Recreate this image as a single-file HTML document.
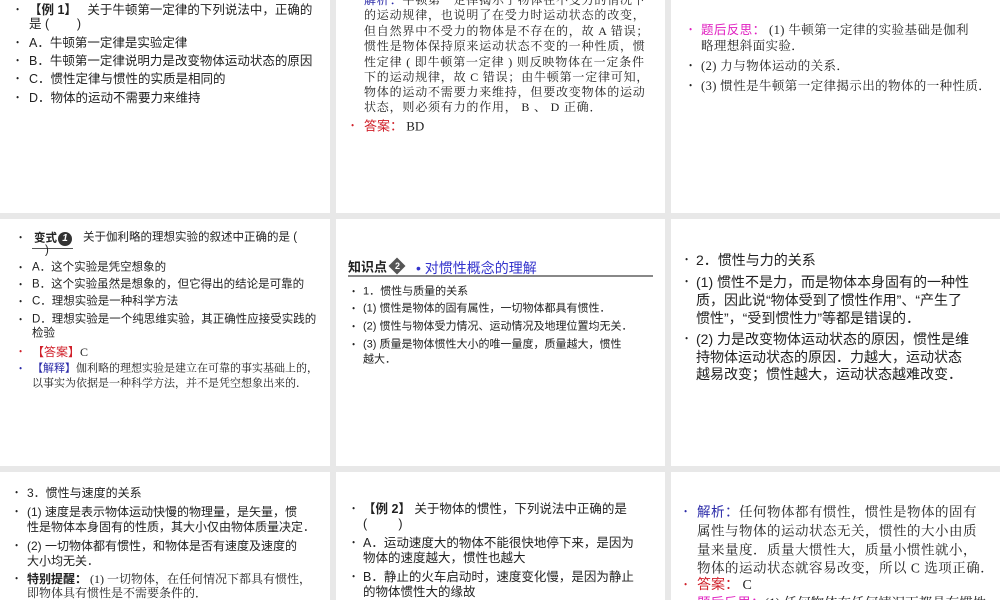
<!DOCTYPE html>
<html><head><meta charset="utf-8"><style>
*{margin:0;padding:0;box-sizing:border-box}
body{width:1000px;height:600px;background:#e8e8e8;position:relative;overflow:hidden;font-family:"Liberation Serif","Noto Serif CJK SC","Noto Sans CJK SC",serif;color:#222}
.p{position:absolute;background:#fff;overflow:hidden}
.l{position:absolute;white-space:nowrap;line-height:1;transform:translateY(-50%)}
.b{position:absolute;font-size:9px;line-height:1;transform:translateY(-50%)}
.s{font-family:"Liberation Sans","Noto Sans CJK SC",sans-serif}
.red{color:#d0202a}.blue{color:#2a2aa8}.pink{color:#e020c0}
</style></head><body>
<!-- row1 -->
<div class="p" style="left:0;top:0;width:330px;height:213px">
 <div class="b" style="left:16px;top:10px">•</div><div class="l s" style="left:29px;top:10px;font-size:12.5px"><b>【例 1】</b>&nbsp;&nbsp; 关于牛顿第一定律的下列说法中，正确的</div>
 <div class="l s" style="left:29px;top:24px;font-size:12.5px">是 (&nbsp;&nbsp;&nbsp;&nbsp;&nbsp;&nbsp;&nbsp; )</div>
 <div class="b" style="left:16px;top:43px">•</div><div class="l s" style="left:29px;top:43px;font-size:12.5px">A．牛顿第一定律是实验定律</div>
 <div class="b" style="left:16px;top:61px">•</div><div class="l s" style="left:29px;top:61px;font-size:12.5px">B．牛顿第一定律说明力是改变物体运动状态的原因</div>
 <div class="b" style="left:16px;top:79px">•</div><div class="l s" style="left:29px;top:79px;font-size:12.5px">C．惯性定律与惯性的实质是相同的</div>
 <div class="b" style="left:16px;top:98px">•</div><div class="l s" style="left:29px;top:98px;font-size:12.5px">D．物体的运动不需要力来维持</div>
</div>
<div class="p" style="left:336px;top:0;width:329px;height:213px">
 <div class="l" style="left:28px;top:0px;font-size:12px;letter-spacing:0.8px"><span class="blue s">解析：</span>牛顿第一定律揭示了物体在不受力的情况下</div>
 <div class="l" style="left:28px;top:15px;font-size:12px;letter-spacing:0.8px">的运动规律，也说明了在受力时运动状态的改变，</div>
 <div class="l" style="left:28px;top:31px;font-size:12px;letter-spacing:0.8px">但自然界中不受力的物体是不存在的，故 A 错误；</div>
 <div class="l" style="left:28px;top:46px;font-size:12px;letter-spacing:0.8px">惯性是物体保持原来运动状态不变的一种性质，惯</div>
 <div class="l" style="left:28px;top:62px;font-size:12px;letter-spacing:0.8px">性定律 ( 即牛顿第一定律 ) 则反映物体在一定条件</div>
 <div class="l" style="left:28px;top:77px;font-size:12px;letter-spacing:0.8px">下的运动规律，故 C 错误；由牛顿第一定律可知，</div>
 <div class="l" style="left:28px;top:92px;font-size:12px;letter-spacing:0.8px">物体的运动不需要力来维持，但要改变物体的运动</div>
 <div class="l" style="left:28px;top:107px;font-size:12px;letter-spacing:0.8px">状态，则必须有力的作用， B 、 D 正确．</div>
 <div class="b red" style="left:15px;top:126px">•</div><div class="l" style="left:28px;top:126px;font-size:13px"><span class="red s">答案：</span> BD</div>
</div>
<div class="p" style="left:671px;top:0;width:329px;height:213px">
 <div class="b pink" style="left:18px;top:30px">•</div><div class="l" style="left:30px;top:30px;font-size:12.5px;letter-spacing:0.4px"><span class="pink s">题后反思：</span> (1) 牛顿第一定律的实验基础是伽利</div>
 <div class="l" style="left:30px;top:46px;font-size:12.5px;letter-spacing:0.4px">略理想斜面实验．</div>
 <div class="b" style="left:18px;top:66px">•</div><div class="l" style="left:30px;top:66px;font-size:12.5px;letter-spacing:0.4px">(2) 力与物体运动的关系．</div>
 <div class="b" style="left:18px;top:86px">•</div><div class="l" style="left:30px;top:86px;font-size:12.5px;letter-spacing:0.4px">(3) 惯性是牛顿第一定律揭示出的物体的一种性质．</div>
</div>
<!-- row2 -->
<div class="p" style="left:0;top:219px;width:330px;height:247px">
 <div class="b" style="left:19px;top:19px">•</div>
 <div class="l s" style="left:34px;top:20px;font-size:11.5px"><b>变式</b></div>
 <div style="position:absolute;left:58px;top:13px;width:14px;height:14px;border-radius:50%;background:#333;color:#fff;font:bold italic 10px 'Liberation Sans',sans-serif;text-align:center;line-height:14px">1</div>
 <div style="position:absolute;left:32px;top:29px;width:41px;height:1px;background:#555"></div>
 <div class="l s" style="left:83px;top:19px;font-size:11.5px">关于伽利略的理想实验的叙述中正确的是 (</div>
 <div class="l s" style="left:45px;top:32px;font-size:11.5px">)</div>
 <div class="b" style="left:19px;top:49px">•</div><div class="l s" style="left:32px;top:49px;font-size:11.5px">A．这个实验是凭空想象的</div>
 <div class="b" style="left:19px;top:66px">•</div><div class="l s" style="left:32px;top:66px;font-size:11.5px">B．这个实验虽然是想象的，但它得出的结论是可靠的</div>
 <div class="b" style="left:19px;top:83px">•</div><div class="l s" style="left:32px;top:83px;font-size:11.5px">C．理想实验是一种科学方法</div>
 <div class="b" style="left:19px;top:101px">•</div><div class="l s" style="left:32px;top:101px;font-size:11.5px">D．理想实验是一个纯思维实验，其正确性应接受实践的</div>
 <div class="l s" style="left:32px;top:115px;font-size:11.5px">检验</div>
 <div class="b red" style="left:19px;top:133px">•</div><div class="l" style="left:32px;top:133px;font-size:12px"><span class="red s">【答案】</span>C</div>
 <div class="b blue" style="left:19px;top:150px">•</div><div class="l" style="left:32px;top:150px;font-size:11px"><span class="blue s">【解释】</span>伽利略的理想实验是建立在可靠的事实基础上的，</div>
 <div class="l" style="left:32px;top:165px;font-size:11px">以事实为依据是一种科学方法，并不是凭空想象出来的．</div>
</div>
<div class="p" style="left:336px;top:219px;width:329px;height:247px">
 <div class="l s" style="left:12px;top:48px;font-size:13px"><b>知识点</b></div>
 <div style="position:absolute;left:55px;top:41px;width:12px;height:12px;background:#555;transform:rotate(45deg)"></div>
 <div style="position:absolute;left:56px;top:41px;width:11px;color:#fff;font:bold 9px 'Liberation Sans',sans-serif;text-align:center;line-height:12px">2</div>
 <div class="l s" style="left:80px;top:49px;font-size:14px;color:#3333cc">• 对惯性概念的理解</div>
 <div style="position:absolute;left:12px;top:56px;width:305px;height:2px;background:#888"></div>
 <div class="b" style="left:16px;top:73px">•</div><div class="l s" style="left:27px;top:73px;font-size:11px">1．惯性与质量的关系</div>
 <div class="b" style="left:16px;top:90px">•</div><div class="l s" style="left:27px;top:90px;font-size:11px">(1) 惯性是物体的固有属性，一切物体都具有惯性．</div>
 <div class="b" style="left:16px;top:108px">•</div><div class="l s" style="left:27px;top:108px;font-size:11px">(2) 惯性与物体受力情况、运动情况及地理位置均无关．</div>
 <div class="b" style="left:16px;top:126px">•</div><div class="l s" style="left:27px;top:126px;font-size:11px">(3) 质量是物体惯性大小的唯一量度，质量越大，惯性</div>
 <div class="l s" style="left:27px;top:141px;font-size:11px">越大．</div>
</div>
<div class="p" style="left:671px;top:219px;width:329px;height:247px">
 <div class="b" style="left:14px;top:41px">•</div><div class="l s" style="left:25px;top:41px;font-size:14px">2．惯性与力的关系</div>
 <div class="b" style="left:14px;top:63px">•</div><div class="l s" style="left:25px;top:63px;font-size:14px">(1) 惯性不是力，而是物体本身固有的一种性</div>
 <div class="l s" style="left:25px;top:81px;font-size:14px">质，因此说“物体受到了惯性作用”、“产生了</div>
 <div class="l s" style="left:25px;top:99px;font-size:14px">惯性”，“受到惯性力”等都是错误的．</div>
 <div class="b" style="left:14px;top:120px">•</div><div class="l s" style="left:25px;top:120px;font-size:14px">(2) 力是改变物体运动状态的原因，惯性是维</div>
 <div class="l s" style="left:25px;top:138px;font-size:14px">持物体运动状态的原因．力越大，运动状态</div>
 <div class="l s" style="left:25px;top:155px;font-size:14px">越易改变；惯性越大，运动状态越难改变．</div>
</div>
<!-- row3 -->
<div class="p" style="left:0;top:472px;width:330px;height:128px">
 <div class="b" style="left:15px;top:21px">•</div><div class="l s" style="left:27px;top:21px;font-size:12px">3．惯性与速度的关系</div>
 <div class="b" style="left:15px;top:40px">•</div><div class="l s" style="left:27px;top:40px;font-size:12px">(1) 速度是表示物体运动快慢的物理量，是矢量，惯</div>
 <div class="l s" style="left:27px;top:55px;font-size:12px">性是物体本身固有的性质，其大小仅由物体质量决定．</div>
 <div class="b" style="left:15px;top:74px">•</div><div class="l s" style="left:27px;top:74px;font-size:12px">(2) 一切物体都有惯性，和物体是否有速度及速度的</div>
 <div class="l s" style="left:27px;top:89px;font-size:12px">大小均无关．</div>
 <div class="b" style="left:15px;top:107px">•</div><div class="l" style="left:27px;top:107px;font-size:12px"><b class="s">特别提醒：</b> (1) 一切物体，在任何情况下都具有惯性，</div>
 <div class="l" style="left:27px;top:121px;font-size:12px">即物体具有惯性是不需要条件的．</div>
</div>
<div class="p" style="left:336px;top:472px;width:329px;height:128px">
 <div class="b" style="left:16px;top:37px">•</div><div class="l s" style="left:27px;top:37px;font-size:12.5px"><b>【例 2】</b> 关于物体的惯性，下列说法中正确的是</div>
 <div class="l s" style="left:27px;top:52px;font-size:12.5px">(&nbsp;&nbsp;&nbsp;&nbsp;&nbsp;&nbsp;&nbsp;&nbsp; )</div>
 <div class="b" style="left:16px;top:71px">•</div><div class="l s" style="left:27px;top:71px;font-size:12.5px">A．运动速度大的物体不能很快地停下来，是因为</div>
 <div class="l s" style="left:27px;top:86px;font-size:12.5px">物体的速度越大，惯性也越大</div>
 <div class="b" style="left:16px;top:105px">•</div><div class="l s" style="left:27px;top:105px;font-size:12.5px">B．静止的火车启动时，速度变化慢，是因为静止</div>
 <div class="l s" style="left:27px;top:120px;font-size:12.5px">的物体惯性大的缘故</div>
</div>
<div class="p" style="left:671px;top:472px;width:329px;height:128px">
 <div class="b blue" style="left:13px;top:40px">•</div><div class="l" style="left:26px;top:40px;font-size:13.5px;letter-spacing:0.5px"><span class="blue s">解析：</span>任何物体都有惯性，惯性是物体的固有</div>
 <div class="l" style="left:26px;top:59px;font-size:13.5px;letter-spacing:0.5px">属性与物体的运动状态无关，惯性的大小由质</div>
 <div class="l" style="left:26px;top:78px;font-size:13.5px;letter-spacing:0.5px">量来量度．质量大惯性大，质量小惯性就小，</div>
 <div class="l" style="left:26px;top:96px;font-size:13.5px;letter-spacing:0.5px">物体的运动状态就容易改变，所以 C 选项正确．</div>
 <div class="b red" style="left:13px;top:113px">•</div><div class="l" style="left:26px;top:113px;font-size:14px"><span class="red s">答案：</span> C</div>
 <div class="l" style="left:26px;top:131px;font-size:13.5px"><span class="pink s">题后反思：</span>(1) 任何物体在任何情况下都具有惯性</div>
</div>
</body></html>
